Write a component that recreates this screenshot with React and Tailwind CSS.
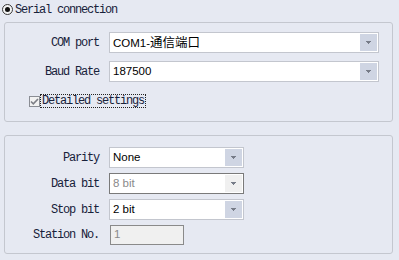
import React from 'react';

const mono = { fontFamily: '"Liberation Mono", monospace' };
const sans = { fontFamily: '"Liberation Sans", "Noto Sans CJK SC", sans-serif' };

// Small down arrow used in the combo buttons
const Arrow = ({ color = '#777c88' }) => (
  <svg width="5" height="3" viewBox="0 0 5 3">
    <path d="M0 0h5v1H0zM1 1h3v1H1zM2 2h1v1H2z" fill={color} />
  </svg>
);

const Combo = ({ value, width, disabled }) => (
  <div
    className={`flex h-[21px] items-stretch border bg-white p-[1px] ${disabled ? 'border-[#7a7a7a]' : 'border-[#c3c6ce]'}`}
    style={{ width }}
  >
    <div
      className={`flex flex-1 items-center pl-[2px] pt-[1px] text-[11.5px] ${disabled ? 'text-[#8a8a8a]' : 'text-black'}`}
      style={sans}
    >
      {value}
    </div>
    <div className={`flex w-[17px] items-center justify-center ${disabled ? 'bg-[#f0f0f0]' : 'bg-[#cfd5e3]'}`}>
      <Arrow />
    </div>
  </div>
);

const Label = ({ children }) => (
  <div className="w-[95px] shrink-0 pr-[1px] text-right text-[12px] tracking-[-1.2px] text-[#18213a]" style={mono}>
    {children}
  </div>
);

const Row = ({ label, children }) => (
  <div className="flex items-center gap-[9px]">
    <Label>{label}</Label>
    {children}
  </div>
);

const App = () => {
  return (
    <div className="flex h-[260px] w-[399px] flex-col bg-[#e6e9f2]">
      {/* Radio header */}
      <div className="flex h-[17px] items-center pl-[2px] pt-[1px]">
        <div className="flex h-[11px] w-[11px] items-center justify-center rounded-full border border-[#3a3a3a] bg-[#f4f4f4]">
          <div className="h-[5px] w-[5px] rounded-full bg-[#111]" />
        </div>
        <span className="ml-[2px] pt-[1px] text-[12px] tracking-[-1.2px] text-[#18213a]" style={mono}>
          Serial connection
        </span>
      </div>

      {/* Connection box */}
      <div className="ml-[4px] mr-[6px] mt-[5px] flex h-[100px] flex-col rounded-[3px] border border-[#c4c7cf] pt-[9px]">
        <div className="flex flex-col gap-[8px]">
          <Row label="COM port">
            <Combo
              width={270}
              value={
                <span>
                  COM1-<span className="text-[12.5px]">通信端口</span>
                </span>
              }
            />
          </Row>
          <Row label="Baud Rate">
            <Combo width={270} value="187500" />
          </Row>
        </div>
        <div className="ml-[24px] mt-[12px] flex items-center">
          <div className="flex h-[11px] w-[11px] items-center justify-center border border-[#8a8d94] bg-[#f2f2f2]">
            <svg width="9" height="9" viewBox="0 0 9 9">
              <path d="M1 4.5l2.3 2.3L8 2" stroke="#7d7f86" strokeWidth="1.6" fill="none" />
            </svg>
          </div>
          <span
            className="border border-dotted border-[#222] px-[1px] text-[12px] leading-[12px] tracking-[-1.2px] text-[#18213a]"
            style={mono}
          >
            Detailed settings
          </span>
        </div>
      </div>

      {/* Detail box */}
      <div className="ml-[4px] mr-[6px] mt-[13px] flex h-[119px] flex-col gap-[5px] rounded-[3px] border border-[#c4c7cf] pt-[11px]">
        <Row label="Parity">
          <Combo width={135} value="None" />
        </Row>
        <Row label="Data bit">
          <Combo width={135} value="8 bit" disabled />
        </Row>
        <Row label="Stop bit">
          <Combo width={135} value="2 bit" />
        </Row>
        <Row label="Station No.">
          <div
            className="ml-[1px] flex h-[20px] w-[74px] items-center border border-[#8a8a8a] bg-[#f0f0f0] pl-[3px] text-[11.5px] text-[#8a8a8a]"
            style={sans}
          >
            1
          </div>
        </Row>
      </div>
    </div>
  );
};

export default App;
